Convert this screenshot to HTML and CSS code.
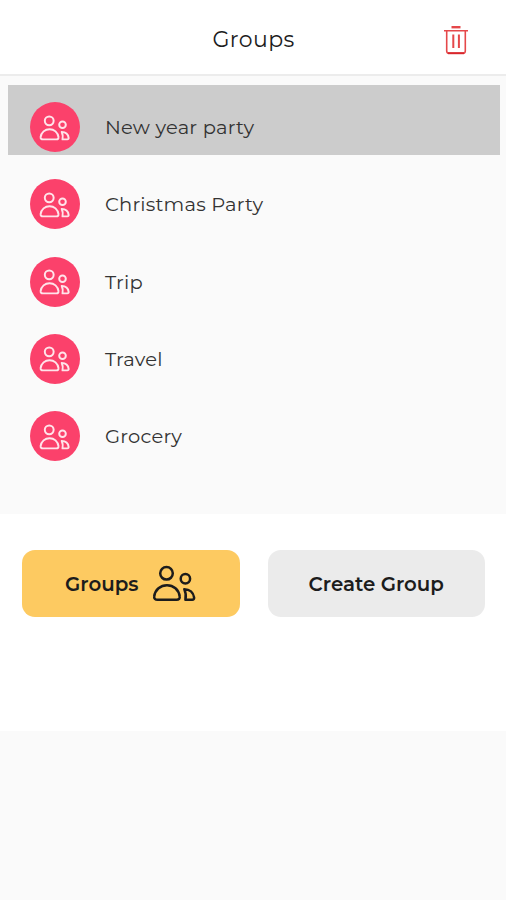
FILE: index.html
```html
<!DOCTYPE html>
<html lang="en">
<head>
    <meta charset="UTF-8">
    <meta name="viewport" content="width=device-width, initial-scale=1.0">
    <title>Groups</title>
    <link rel="stylesheet" href="styles.css">
</head>
<body>
    <svg class="sprite">
        <symbol id="people" viewBox="0 0 44 37">
            <circle cx="14.5" cy="8.3" r="6.3"/>
            <path d="M5.500 34.700h19.200c2.200 0 3.300-1.300 3-3.200C26.800 24.700 21.500 20.200 15 20.200S3.100 24.700 2.200 31.500c-.3 1.900 1 3.200 3.300 3.200z"/>
            <circle cx="33.4" cy="13.8" r="4.7"/>
            <path stroke-linejoin="round" d="M32.300 24.200c5.300 0 9.100 3.300 9.800 8.300.2 1.400-.6 2.200-1.800 2.200h-6.900c.8-3.600.5-7.200-1.100-10.500z"/>
        </symbol>
    </svg>

    <header>
        <h1>Groups</h1>
        <button class="delete" aria-label="Delete">
            <svg viewBox="0 0 24 30">
                <path class="lid" d="M7.500 2.200h9"/>
                <path d="M0 5.800h24M2.700 5.800v20.200c0 1.500.8 2.300 2.300 2.300h14c1.500 0 2.300-.8 2.300-2.300V5.800"/>
                <path class="bars" d="M9.300 9.500v13.500M14.900 9.500v13.500"/>
                <path class="base" d="M4 28.200h16"/>
            </svg>
        </button>
    </header>

    <ul class="groups">
        <li class="selected"><span class="avatar"><svg><use href="#people"/></svg></span><span class="name">New year party</span></li>
        <li><span class="avatar"><svg><use href="#people"/></svg></span><span class="name">Christmas Party</span></li>
        <li><span class="avatar"><svg><use href="#people"/></svg></span><span class="name">Trip</span></li>
        <li><span class="avatar"><svg><use href="#people"/></svg></span><span class="name">Travel</span></li>
        <li><span class="avatar"><svg><use href="#people"/></svg></span><span class="name">Grocery</span></li>
    </ul>

    <footer>
        <button class="tab active"><span>Groups</span><svg><use href="#people"/></svg></button>
        <button class="tab"><span>Create Group</span></button>
    </footer>
</body>
</html>
```
FILE: styles.css
```css
* {
    box-sizing: border-box;
}
body {
    font-family: Montserrat, Inter, sans-serif;
    margin: 0;
    background-color: #fafafa;
    color: #1c1c1c;
}
button {
    font-family: inherit;
    border: none;
    padding: 0;
    background: none;
}
svg {
    fill: none;
    stroke: currentColor;
    display: block;
}
.sprite {
    display: none;
}
header {
    height: 76px;
    background-color: #fff;
    border-bottom: 2px solid #ececec;
    display: grid;
    grid-template-columns: 1fr auto 1fr;
    align-items: center;
    padding: 5px 38px 0 39px;
}
h1 {
    grid-column: 2;
    margin: 0;
    font-size: 22px;
    font-weight: 450;
    letter-spacing: 0.4px;
}
.delete {
    justify-self: end;
    color: #e5484a;
}
.delete svg {
    width: 24px;
    height: 30px;
    stroke-width: 1.6;
}
.delete .lid {
    stroke-width: 2.4;
}
.delete .bars {
    stroke-width: 2;
}
.delete .base {
    stroke: #d8262c;
    stroke-width: 2;
}
.groups {
    list-style: none;
    margin: 0;
    padding: 9px 6px 0 8px;
    height: 438px;
}
.groups li {
    height: 70px;
    margin-bottom: 7.3px;
    padding: 17px 22px 0;
    display: flex;
    align-items: flex-start;
}
.groups .selected {
    background-color: #ccc;
}
.avatar {
    width: 50px;
    height: 50px;
    border-radius: 50%;
    background-color: #fb416b;
    color: #ffe4ea;
    display: flex;
    align-items: center;
    justify-content: center;
    padding: 1px 1px 0 0;
}
.avatar svg {
    width: 31px;
    height: 26px;
    stroke-width: 2.8;
}
.name {
    margin-left: 25px;
    color: #333;
    font-size: 19.5px;
    font-weight: 400;
    line-height: 50px;
    letter-spacing: 0.2px;
}
footer {
    height: 217px;
    background-color: #fff;
    padding: 36px 21px 0 22px;
    display: grid;
    grid-template-columns: 1fr 1fr;
    gap: 28px;
    align-items: start;
}
.tab {
    height: 67px;
    border-radius: 13px;
    background-color: #ebebeb;
    color: #1c1c1c;
    font-size: 19.8px;
    font-weight: 600;
    display: flex;
    align-items: center;
    justify-content: center;
    gap: 14px;
}
.active {
    background-color: #fdca61;
}
.tab svg {
    width: 44px;
    height: 37px;
    stroke-width: 2.5;
}
```
